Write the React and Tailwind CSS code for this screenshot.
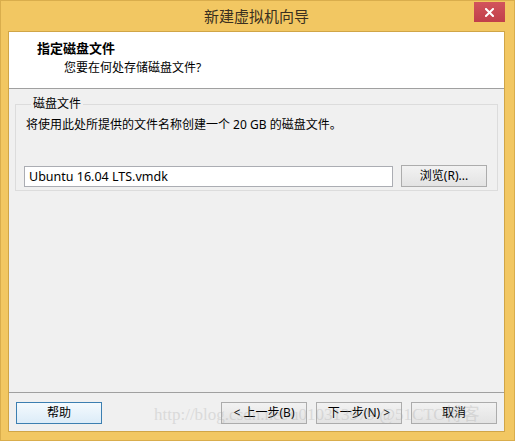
import React from 'react';

const ui = { fontFamily: '"Noto Sans", "Noto Sans CJK SC", sans-serif' };

const Button = ({ children, primary }) => (
  <button
    className={
      primary
        ? 'w-[86px] h-[22px] border border-[#3c7fb1] bg-gradient-to-b from-[#f4fafe] to-[#dcecf8] text-[12px] text-black leading-none'
        : 'w-[86px] h-[22px] border border-[#acacac] bg-gradient-to-b from-[#f2f2f2] to-[#e3e3e3] text-[12px] text-black leading-none'
    }
  >
    {children}
  </button>
);

const NewVmWizard = () => {
  return (
    <div
      className="relative w-[515px] h-[441px] bg-[#f2c762] border border-[#d9ad4c] flex flex-col overflow-hidden"
      style={ui}
    >
      {/* title bar */}
      <div className="h-[30px] grid grid-cols-[1fr_auto_1fr] items-start pl-[7px] pr-[9px]">
        <div />
        <div className="pt-[5px] text-[15px] leading-[20px] text-[#3a3020]">新建虚拟机向导</div>
        <div className="flex justify-end pt-[1px]">
          <div className="w-[31px] h-[20px] bg-gradient-to-b from-[#d2545c] to-[#c13f4a] flex items-center justify-center">
            <svg width="9" height="9" viewBox="0 0 9 9">
              <path d="M1 1 L8 8 M8 1 L1 8" stroke="#fff" strokeWidth="2" strokeLinecap="square" />
            </svg>
          </div>
        </div>
      </div>

      {/* client area */}
      <div className="flex-1 ml-[7px] mr-[9px] mb-[8px] border border-[#d0a547] flex flex-col bg-[#f0f0f0]">
        <div className="h-[57px] bg-white border-b border-[#a0a0a0] pt-[8px]">
          <div className="pl-[28px] text-[13px] leading-[16px] font-bold text-black">指定磁盘文件</div>
          <div className="pl-[55px] mt-[4px] text-[12px] leading-[16px] text-black">您要在何处存储磁盘文件?</div>
        </div>

        <div className="flex-1 px-[6px] pt-[7px]">
          <fieldset className="border border-[#dcdcdc] pl-[8px] pr-[8px] pb-[3px]">
            <legend className="ml-[7px] px-[2px] text-[12px] leading-[16px] text-black">磁盘文件</legend>
            <div className="mt-[5px] ml-[2px] text-[12px] leading-[16px] text-black">
              将使用此处所提供的文件名称创建一个 20 GB 的磁盘文件。
            </div>
            <div className="mt-[32px] flex items-center gap-[8px]">
              <div className="w-[369px] h-[21px] bg-white border border-[#abadb3] pl-[4px] text-[12.5px] leading-[19px] text-black">
                Ubuntu 16.04 LTS.vmdk
              </div>
              <Button>浏览(R)...</Button>
            </div>
          </fieldset>
        </div>

        <div className="h-[39px] border-t border-[#a0a0a0] flex items-start justify-between px-[7px] pt-[9px]">
          <Button primary>帮助</Button>
          <div className="flex gap-[9px]">
            <Button>&lt; 上一步(B)</Button>
            <Button>下一步(N) &gt;</Button>
            <Button>取消</Button>
          </div>
        </div>
      </div>

      {/* blog watermark */}
      <div
        className="absolute left-[153px] top-[404px] text-[17px] leading-[20px] text-[#a8a8a8] opacity-30 pointer-events-none whitespace-nowrap"
        style={{ fontFamily: '"Liberation Serif", "Noto Sans CJK SC", serif' }}
      >
        http://blog.csdn.net/u010313979 @51CTO博客
      </div>
    </div>
  );
};

export default function App() {
  return <NewVmWizard />;
}
